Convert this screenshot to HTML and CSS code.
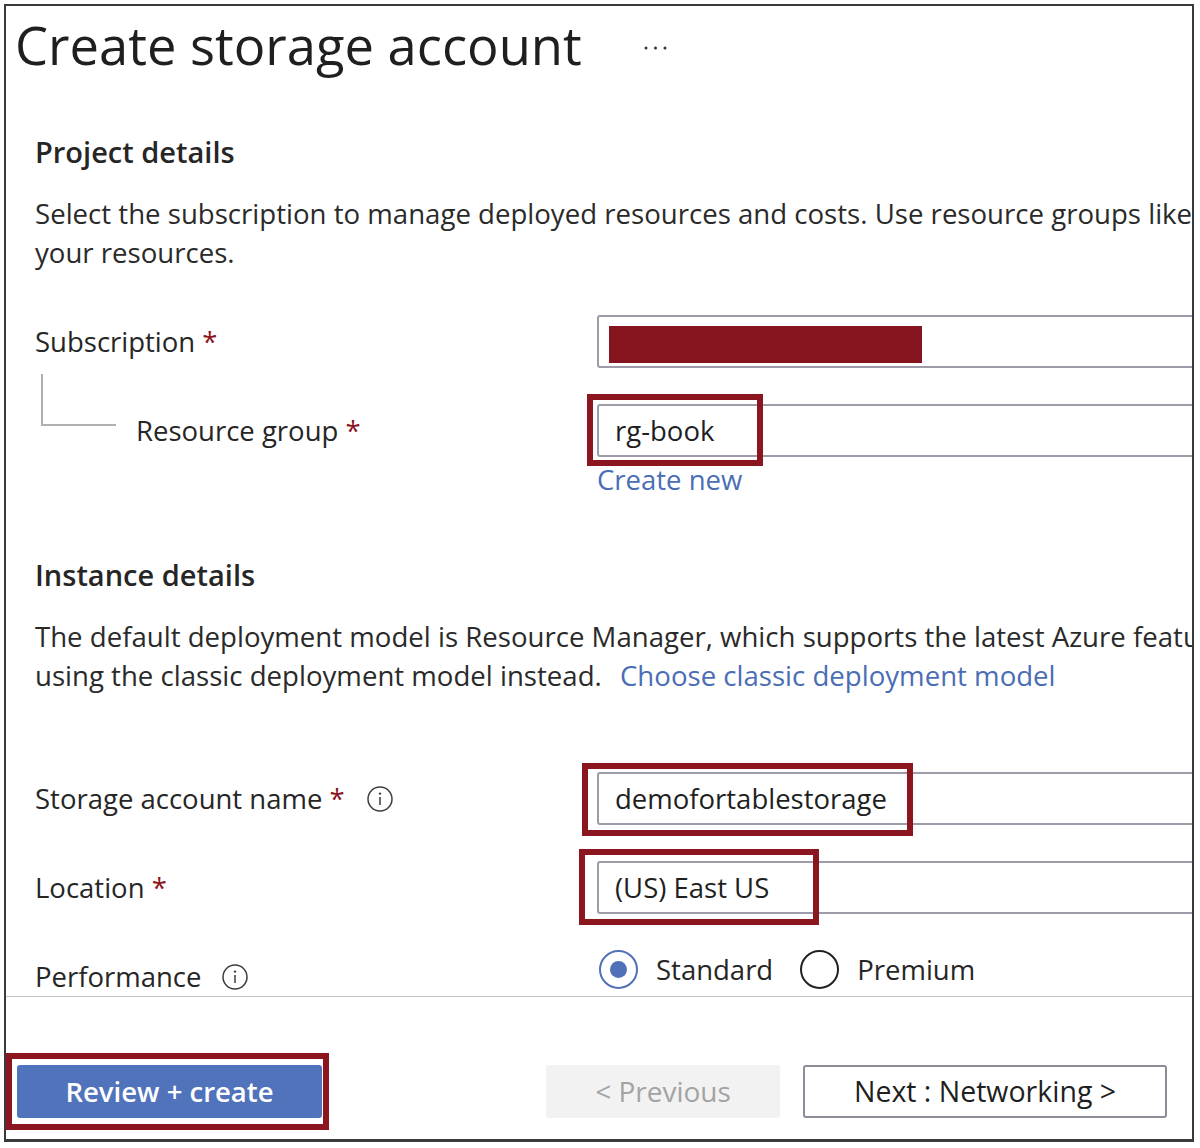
FILE: index.html
```html
<!DOCTYPE html>
<html lang="en">
<head>
<meta charset="utf-8">
<title>Create storage account</title>
<link rel="stylesheet" href="styles.css">
</head>
<body>
<div class="frame">
  <div class="scroll">
    <header class="title-bar">
      <h1 class="title">Create storage account</h1>
      <svg class="more" width="24" height="6" viewBox="0 0 24 6" aria-hidden="true">
        <circle cx="2" cy="3" r="1.5"/><circle cx="11.5" cy="3" r="1.5"/><circle cx="21" cy="3" r="1.5"/>
      </svg>
    </header>

    <section class="section project">
      <h2 class="heading">Project details</h2>
      <p class="desc">Select the subscription to manage deployed resources and costs. Use resource groups like<br>your resources.</p>

      <div class="row row-sub">
        <div class="label"><span class="label-text">Subscription <span class="req">*</span></span></div>
        <div class="control">
          <div class="input"><span class="redact"></span></div>
        </div>
      </div>

      <div class="row row-rg">
        <div class="label label-tree"><span class="tree"></span><span class="label-text">Resource group <span class="req">*</span></span></div>
        <div class="control">
          <div class="input"><span class="value">rg-book</span><span class="mark mark-rg"></span></div>
          <a class="link create-new">Create new</a>
        </div>
      </div>
    </section>

    <section class="section instance">
      <h2 class="heading">Instance details</h2>
      <p class="desc">The default deployment model is Resource Manager, which supports the latest Azure features.<br>using the classic deployment model instead. <a class="link choose">Choose classic deployment model</a></p>

      <div class="row row-storage">
        <div class="label"><span class="label-text">Storage account name <span class="req">*</span></span>
          <svg class="info info-storage" width="26" height="26" viewBox="0 0 26 26" aria-hidden="true"><circle cx="13" cy="13" r="12" /><line x1="13" y1="11" x2="13" y2="19"/><circle class="dot" cx="13" cy="7.6" r="1.2"/></svg>
        </div>
        <div class="control">
          <div class="input"><span class="value">demofortablestorage</span><span class="mark mark-storage"></span></div>
        </div>
      </div>

      <div class="row row-loc">
        <div class="label"><span class="label-text">Location <span class="req">*</span></span></div>
        <div class="control">
          <div class="input"><span class="value">(US) East US</span><span class="mark mark-loc"></span></div>
        </div>
      </div>

      <div class="row row-perf">
        <div class="label label-perf"><span class="label-text">Performance</span>
          <svg class="info info-perf" width="26" height="26" viewBox="0 0 26 26" aria-hidden="true"><circle cx="13" cy="13" r="12" /><line x1="13" y1="11" x2="13" y2="19"/><circle class="dot" cx="13" cy="7.6" r="1.2"/></svg>
        </div>
        <div class="control radios">
          <label class="radio-opt"><span class="radio checked"></span><span class="radio-text">Standard</span></label>
          <label class="radio-opt opt-premium"><span class="radio"></span><span class="radio-text">Premium</span></label>
        </div>
      </div>
    </section>
  </div>

  <footer class="footer">
    <div class="btn-wrap">
      <button class="btn btn-primary">Review + create</button>
      <span class="mark mark-review"></span>
    </div>
    <button class="btn btn-prev" disabled>&lt; Previous</button>
    <button class="btn btn-next">Next : Networking &gt;</button>
  </footer>
</div>
</body>
</html>
```

FILE: styles.css
```css
* { box-sizing: border-box; }

html, body {
  margin: 0;
  padding: 0;
  background: #ffffff;
}

body {
  font-family: "Open Sans", "Noto Sans", "Liberation Sans", sans-serif;
  color: #262626;
}

.frame {
  margin: 4px 0 0 4px;
  width: 1190px;
  height: 1138px;
  border: 2px solid #3a3a3a;
  border-bottom-width: 3px;
  display: flex;
  flex-direction: column;
  overflow: hidden;
  background: #ffffff;
}

.scroll {
  flex: none;
  height: 990px;
  overflow: hidden;
}

/* Header */
.title-bar {
  display: flex;
  align-items: flex-start;
  padding: 4px 0 0 9px;
}

.title {
  margin: 0;
  font-size: 52.5px;
  line-height: 70px;
  font-weight: 400;
  color: #1f1f1f;
  white-space: nowrap;
}

.more {
  flex: none;
  margin: 35px 0 0 62px;
  fill: #333333;
}

/* Sections */
.section {
  padding-left: 29px;
}

.project { padding-top: 51.5px; }
.instance { padding-top: 55.5px; }

.heading {
  margin: 0;
  font-size: 29px;
  line-height: 40px;
  font-weight: 600;
  color: #262626;
  white-space: nowrap;
}

.desc {
  margin: 22.5px 0 0;
  font-size: 27.6px;
  line-height: 39px;
  white-space: nowrap;
  color: #2a2a2a;
}

.link {
  color: #4b6db5;
  text-decoration: none;
}

.choose { margin-left: 11px; }

/* Form rows */
.row {
  display: flex;
  align-items: flex-start;
}

.row-sub { margin-top: 43px; }
.row-rg { margin-top: 36px; }
.row-storage { margin-top: 77px; }
.row-loc { margin-top: 36px; }
.row-perf { margin-top: 36px; }

.label {
  flex: none;
  width: 562px;
  height: 53px;
  display: flex;
  align-items: center;
  font-size: 27.5px;
  line-height: 53px;
  white-space: nowrap;
  color: #262626;
}

.req {
  color: #8b1620;
}

.tree {
  flex: none;
  align-self: flex-start;
  width: 75px;
  height: 52px;
  margin: -30px 20px 0 6px;
  border-left: 2px solid #b0b0b0;
  border-bottom: 2px solid #b0b0b0;
}

.info {
  flex: none;
  fill: none;
  stroke: #3c3c3c;
  stroke-width: 1.5;
}

.info .dot {
  fill: #3c3c3c;
  stroke: none;
}

.info-storage { margin-left: 22px; }
.info-perf { margin-left: 21px; }

.control {
  flex: none;
  width: 700px;
}

.input {
  position: relative;
  height: 53px;
  border: 2px solid #9d9ca8;
  border-radius: 3px;
  padding-left: 16px;
  font-size: 27.5px;
  line-height: 49px;
  color: #1f1f1f;
  white-space: nowrap;
}

.redact {
  position: absolute;
  left: 10px;
  top: 9px;
  width: 313px;
  height: 37px;
  background: #85141e;
}

.create-new {
  display: block;
  margin-top: 3px;
  font-size: 27.5px;
  line-height: 39px;
}

/* Red highlight marks */
.mark {
  position: absolute;
  border: 6px solid #8b1620;
  pointer-events: none;
}

.mark-rg { left: -12px; top: -12px; width: 176px; height: 72px; }
.mark-storage { left: -17px; top: -11px; width: 331px; height: 73px; }
.mark-loc { left: -20px; top: -14px; width: 240px; height: 76px; }

/* Performance */
.label-perf {
  height: 46px;
  line-height: 39px;
  padding-top: 7px;
}

.radios {
  display: flex;
  align-items: center;
  height: 39px;
  font-size: 27.5px;
  line-height: 39px;
}

.radio-opt {
  display: flex;
  align-items: center;
}

.radio {
  flex: none;
  width: 39px;
  height: 39px;
  margin-left: 2px;
  border: 2px solid #222222;
  border-radius: 50%;
  display: flex;
  align-items: center;
  justify-content: center;
}

.radio.checked {
  border-color: #5070b8;
}

.radio.checked::after {
  content: "";
  width: 17px;
  height: 17px;
  border-radius: 50%;
  background: #5070b8;
}

.radio-text {
  margin-left: 18px;
  color: #262626;
}

.opt-premium { margin-left: 27px; }
.opt-premium .radio { margin-left: 0; }

/* Footer */
.footer {
  flex: 1;
  display: flex;
  align-items: flex-start;
  border-top: 1px solid #c4c4c4;
  padding: 68px 0 0 11px;
}

.btn-wrap {
  position: relative;
  flex: none;
}

.btn {
  flex: none;
  display: block;
  height: 53px;
  margin: 0;
  padding: 0;
  border: none;
  border-radius: 3px;
  font-family: "Open Sans", "Noto Sans", "Liberation Sans", sans-serif;
  font-size: 28px;
  line-height: 53px;
  text-align: center;
  white-space: nowrap;
}

.btn-primary {
  width: 305px;
  background: #5073bb;
  color: #ffffff;
  font-size: 27.5px;
  font-weight: 600;
}

.mark-review { left: -11px; top: -12px; width: 323px; height: 77px; }

.btn-prev {
  width: 234px;
  margin-left: 224px;
  background: #f2f2f2;
  color: #a3a3a3;
}

.btn-next {
  width: 364px;
  margin-left: 23px;
  background: #ffffff;
  border: 2px solid #8e8c98;
  line-height: 49px;
  color: #1f1f1f;
  font-size: 28.5px;
}
```
